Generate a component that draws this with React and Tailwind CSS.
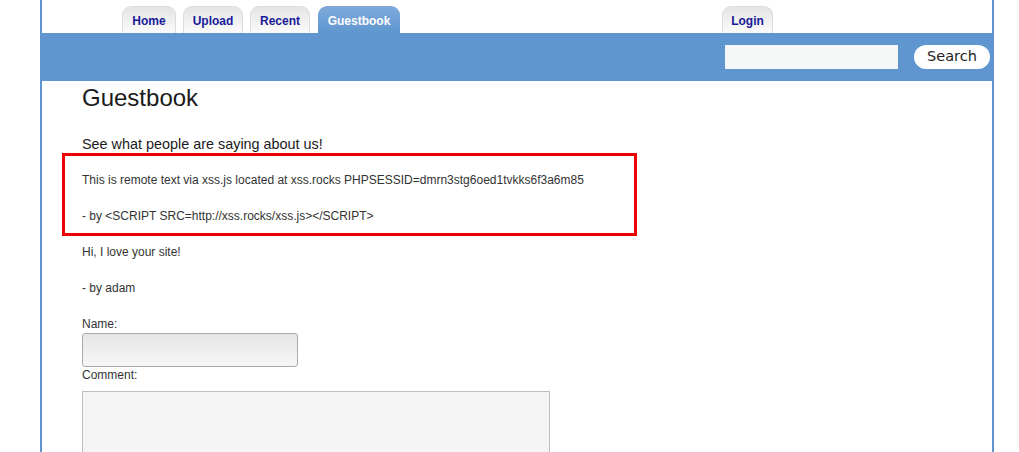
export default function App() {
  const tabs = [
    { label: "Home", w: "w-[54px]" },
    { label: "Upload", w: "w-[60px]" },
    { label: "Recent", w: "w-[60px]" },
  ];
  return (
    <div className="w-[1019px] h-[452px] overflow-hidden bg-white font-['Liberation_Sans',Arial,sans-serif]">
      <div className="ml-[40px] w-[954px] h-[452px] border-x-2 border-[#5f96cf]">
        {/* tabs row */}
        <div className="h-[33px] pt-[6px] flex items-end pl-[80px]">
          <div className="flex gap-[7px]">
            {tabs.map((t) => (
              <div
                key={t.label}
                className={`${t.w} h-[27px] pt-[2px] rounded-t-[9px] border border-b-0 border-[#dcdcdc] bg-gradient-to-b from-[#e4e4e4] to-[#fbfbfb] flex items-center justify-center text-[12px] font-bold text-[#1a1a99]`}
              >
                {t.label}
              </div>
            ))}
            <div className="ml-px w-[82px] h-[27px] pt-[2px] rounded-t-[9px] bg-gradient-to-b from-[#7eaadb] to-[#5f96cf] flex items-center justify-center text-[12px] font-bold text-white">
              Guestbook
            </div>
          </div>
          <div className="ml-[322px] w-[51px] h-[27px] pt-[2px] rounded-t-[9px] border border-b-0 border-[#dcdcdc] bg-gradient-to-b from-[#e4e4e4] to-[#fbfbfb] flex items-center justify-center text-[12px] font-bold text-[#1a1a99]">
            Login
          </div>
        </div>
        {/* blue bar */}
        <div className="h-[48px] bg-[#5f96cf] flex items-center justify-end pr-[2px]">
          <div className="w-[173px] h-[24px] bg-[#f5f6f6]" />
          <div className="ml-[16px] w-[76px] h-[24px] rounded-full bg-white flex items-center justify-center text-[14.5px] text-[#222] font-['DejaVu_Sans',sans-serif]">
            Search
          </div>
        </div>
        {/* content */}
        <div className="pl-[40px] text-[12px] text-[#333]">
          <h1 className="mt-[3px] h-[28px] leading-[28px] text-[24px] text-[#1a1a1a]">Guestbook</h1>
          <div className="mt-[22px] h-[19px] leading-[20px] text-[14.4px] text-[#1a1a1a]">
            See what people are saying about us!
          </div>
          <div className="-ml-[20px] w-[575px] border-[3px] border-[#ee0000] pl-[17px] pt-[15px] pb-[8px]">
            <div className="h-[18px] leading-[18px]">
              This is remote text via xss.js located at xss.rocks PHPSESSID=dmrn3stg6oed1tvkks6f3a6m85
            </div>
            <div className="mt-[18px] h-[18px] leading-[18px]">
              - by &lt;SCRIPT SRC=http://xss.rocks/xss.js&gt;&lt;/SCRIPT&gt;
            </div>
          </div>
          <div className="mt-[7px] h-[18px] leading-[18px]">Hi, I love your site!</div>
          <div className="mt-[18px] h-[18px] leading-[18px]">- by adam</div>
          <div className="mt-[20px] h-[14px] leading-[14px]">Name:</div>
          <div className="mt-[2px] w-[216px] h-[34px] rounded-[3px] border border-[#a9a9a9] bg-gradient-to-b from-[#e6e6e6] to-[#f6f6f6]" />
          <div className="mt-px h-[14px] leading-[14px]">Comment:</div>
          <div className="mt-[9px] w-[468px] h-[80px] border border-[#bdbdbd] bg-[#f5f5f5]" />
        </div>
      </div>
    </div>
  );
}
